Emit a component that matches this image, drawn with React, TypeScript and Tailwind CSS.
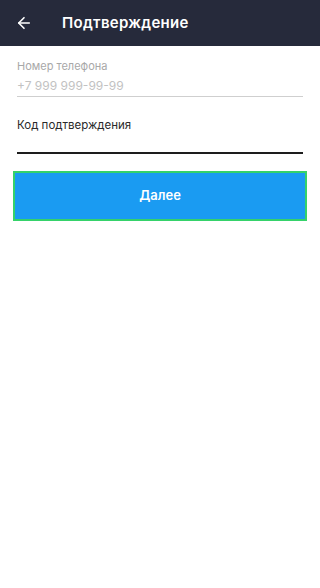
import { ArrowLeft } from 'lucide-react';

export default function App() {
  return (
    <div className="min-h-[588px] w-full bg-white" style={{ fontFamily: 'Inter, "Noto Sans", sans-serif' }}>
      <header className="flex h-[46px] items-center bg-[#262a3b] px-[15px]">
        <ArrowLeft className="h-[18px] w-[18px] text-white" strokeWidth={2.2} />
        <h1 className="ml-[29px] text-[15px] font-semibold tracking-[0.3px] text-white">Подтверждение</h1>
      </header>

      <div className="px-[17px] pt-[13px]">
        <label className="block text-[11px] leading-[14px] text-[#a8a8a8]">Номер телефона</label>
        <div className="mt-[5px] border-b border-[#cfcfcf] pb-[2px] text-[12px] leading-[16px] text-[#c2c2c2]">
          +7 999 999-99-99
        </div>

        <label className="mt-[21px] block text-[11.5px] leading-[14px] text-[#2a2a2a]">Код подтверждения</label>
        <div className="mt-[20px] border-b-2 border-[#1d1d1d]" />
      </div>

      <div className="px-[13px] pt-[17px]">
        <button className="flex h-[50px] w-full items-center justify-center border-2 border-[#35d26a] bg-[#1a9bf2] text-[13px] font-semibold text-white">
          Далее
        </button>
      </div>
    </div>
  );
}
